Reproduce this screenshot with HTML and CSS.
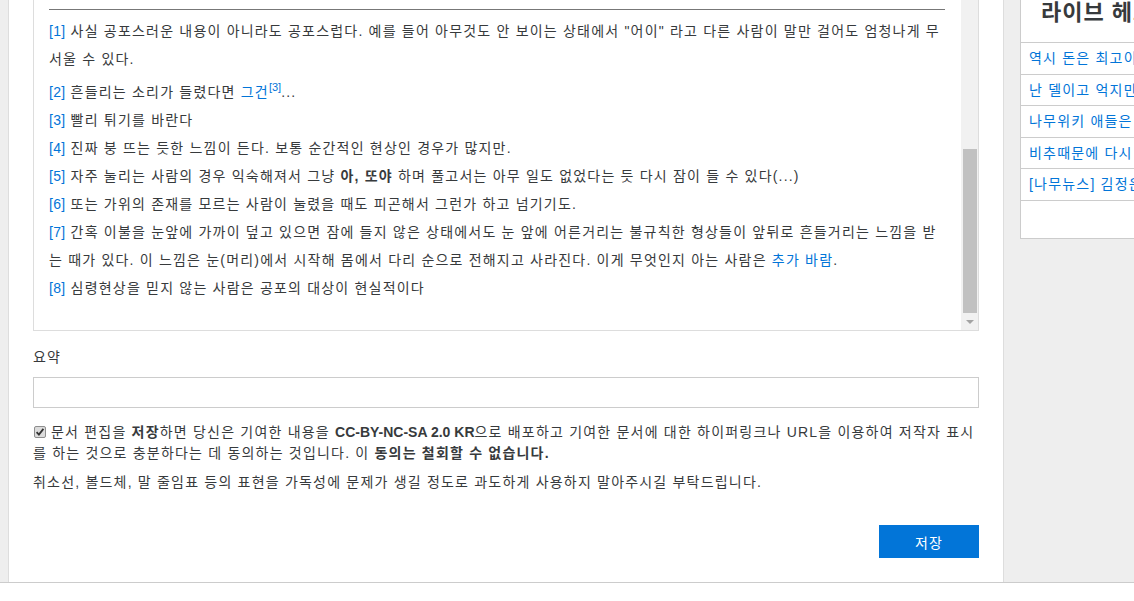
FILE: index.html
```html
<!DOCTYPE html>
<html lang="ko">
<head>
<meta charset="utf-8">
<title>편집</title>
<link rel="stylesheet" href="styles.css">
</head>
<body>
<div class="page">
  <main class="article">
    <div class="preview">
      <div class="preview-content">
        <hr class="fn-rule">
        <div class="fn"><a class="ref">[1]</a> 사실 공포스러운 내용이 아니라도 공포스럽다. 예를 들어 아무것도 안 보이는 상태에서 "어이" 라고 다른 사람이 말만 걸어도 엄청나게 무서울 수 있다.</div>
        <div class="fn"><a class="ref">[2]</a> 흔들리는 소리가 들렸다면 <a class="link">그건</a><sup class="link">[3]</sup>...</div>
        <div class="fn"><a class="ref">[3]</a> 빨리 튀기를 바란다</div>
        <div class="fn"><a class="ref">[4]</a> 진짜 붕 뜨는 듯한 느낌이 든다. 보통 순간적인 현상인 경우가 많지만.</div>
        <div class="fn"><a class="ref">[5]</a> 자주 눌리는 사람의 경우 익숙해져서 그냥 <b>아, 또야</b> 하며 풀고서는 아무 일도 없었다는 듯 다시 잠이 들 수 있다(...)</div>
        <div class="fn"><a class="ref">[6]</a> 또는 가위의 존재를 모르는 사람이 눌렸을 때도 피곤해서 그런가 하고 넘기기도.</div>
        <div class="fn"><a class="ref">[7]</a> 간혹 이불을 눈앞에 가까이 덮고 있으면 잠에 들지 않은 상태에서도 눈 앞에 어른거리는 불규칙한 형상들이 앞뒤로 흔들거리는 느낌을 받는 때가 있다. 이 느낌은 눈(머리)에서 시작해 몸에서 다리 순으로 전해지고 사라진다. 이게 무엇인지 아는 사람은 <a class="link">추가 바람</a>.</div>
        <div class="fn"><a class="ref">[8]</a> 심령현상을 믿지 않는 사람은 공포의 대상이 현실적이다</div>
      </div>
      <div class="scrollbar">
        <div class="track"></div>
        <div class="thumb"></div>
        <div class="arrow"><span class="tri"></span></div>
      </div>
    </div>

    <div class="label">요약</div>
    <div class="input"></div>

    <p class="agree"><span class="check"><svg width="12" height="12" viewBox="0 0 12 12"><rect x="0.5" y="0.5" width="11" height="11" rx="1.5" fill="#dcdcdc" stroke="#8e8e8e"/><path d="M2.6 6.2 L4.9 8.6 L9.4 2.9" fill="none" stroke="#333" stroke-width="1.8"/></svg></span>문서 편집을 <b>저장</b>하면 당신은 기여한 내용을 <b class="lic">CC-BY-NC-SA 2.0 KR</b>으로 배포하고 기여한 문서에 대한 하이퍼링크나 URL을 이용하여 저작자 표시를 하는 것으로 충분하다는 데 동의하는 것입니다. 이 <b>동의는 철회할 수 없습니다.</b></p>
    <p class="notice">취소선, 볼드체, 말 줄임표 등의 표현을 가독성에 문제가 생길 정도로 과도하게 사용하지 말아주시길 부탁드립니다.</p>

    <div class="actions"><button class="save">저장</button></div>
  </main>

  <aside class="sidebar">
    <div class="side-title">라이브 헤드라인</div>
    <a class="side-item">역시 돈은 최고이다</a>
    <a class="side-item">난 델이고 억지만 부린다</a>
    <a class="side-item">나무위키 애들은 왜</a>
    <a class="side-item">비추때문에 다시 올림</a>
    <a class="side-item">[나무뉴스] 김정은 위원장</a>
    <div class="side-foot"></div>
  </aside>
</div>
<footer class="footer"></footer>
</body>
</html>
```

FILE: styles.css
```css
html, body {
  margin: 0;
  padding: 0;
  background: #fff;
  overflow: hidden;
}
body {
  font-family: "Liberation Sans", "Noto Sans CJK KR", sans-serif;
  font-size: 14px;
  color: #373a3c;
  letter-spacing: 1.2px;
}
.page {
  display: flex;
  align-items: flex-start;
  height: 583px;
  box-sizing: border-box;
  background: #eee;
  border-bottom: 1px solid #ccc;
  overflow: hidden;
}
.article {
  flex: 0 0 996px;
  width: 996px;
  height: 582px;
  margin-left: 8px;
  box-sizing: border-box;
  background: #fff;
  border-left: 1px solid #ddd;
  border-right: 1px solid #ddd;
  padding: 0 24px;
}
.preview {
  display: flex;
  height: 331px;
  box-sizing: border-box;
  border: 1px solid #ddd;
  border-top: none;
}
.preview-content {
  flex: 1;
  min-width: 0;
  padding: 0 16px 0 15px;
  overflow: hidden;
}
.fn-rule {
  margin: 9px 0 7px;
  border: 0;
  border-top: 1px solid #777;
  height: 0;
}
.fn {
  line-height: 28px;
}
.ref, .link {
  color: #0275d8;
  text-decoration: none;
}
.ref {
  letter-spacing: 0.3px;
}
sup.link {
  font-size: 11px;
  letter-spacing: 0;
}
.fn b {
  font-weight: bold;
}
.scrollbar {
  flex: 0 0 17px;
  width: 17px;
  display: flex;
  flex-direction: column;
  background: #f1f1f1;
}
.track {
  height: 149px;
}
.thumb {
  height: 164px;
  margin: 0 1px 0 2px;
  background: #c1c1c1;
}
.arrow {
  height: 17px;
  display: flex;
  align-items: center;
  justify-content: center;
}
.tri {
  width: 0;
  height: 0;
  border-left: 4px solid transparent;
  border-right: 4px solid transparent;
  border-top: 4px solid #a3a3a3;
  margin-top: 1px;
}
.label {
  margin-top: 16px;
  line-height: 21px;
}
.input {
  margin-top: 9px;
  height: 31px;
  box-sizing: border-box;
  border: 1px solid #ccc;
  background: #fff;
}
.agree {
  margin: 14px 0 0;
  line-height: 21px;
}
.lic {
  letter-spacing: 0;
}
.check {
  display: inline-block;
  width: 12px;
  height: 12px;
  margin: 0 5px 0 1px;
  vertical-align: -1px;
}
.check svg {
  display: block;
}
.notice {
  margin: 8px 0 0;
  line-height: 21px;
}
.actions {
  margin-top: 32px;
  display: flex;
  justify-content: flex-end;
}
.save {
  width: 100px;
  height: 33px;
  border: 0;
  background: #0275d8;
  color: #fff;
  font-family: "Liberation Sans", "Noto Sans CJK KR", sans-serif;
  font-size: 14px;
  letter-spacing: 1px;
  padding: 0;
}
.sidebar {
  flex: 0 0 300px;
  width: 300px;
  margin-left: 16px;
  background: #fff;
  border: 1px solid #ccc;
  border-top: none;
  display: flex;
  flex-direction: column;
}
.side-title {
  font-size: 22px;
  font-weight: bold;
  letter-spacing: 1px;
  line-height: 26px;
  padding: 0 20px 16px;
  white-space: nowrap;
  border-bottom: 1px solid #ccc;
}
.side-item {
  display: block;
  padding: 5px 8px;
  line-height: 20.6px;
  color: #0275d8;
  white-space: nowrap;
  border-bottom: 1px solid #ccc;
}
.side-foot {
  height: 37px;
}
.footer {
  height: 20px;
  background: #fff;
}
```
